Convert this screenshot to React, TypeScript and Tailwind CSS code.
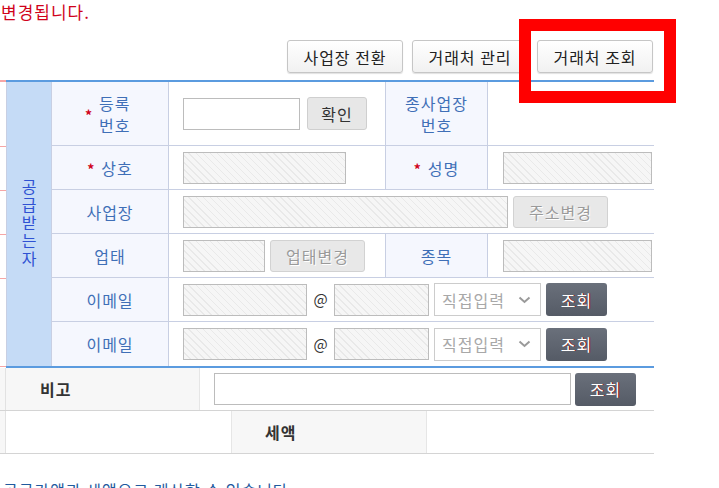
import React from 'react';

const font = "font-['Noto_Sans_CJK_KR',sans-serif] tracking-[1px]";

const hatched =
  'border border-[#bcbcbc] bg-[repeating-linear-gradient(45deg,#f6f6f6_0px,#f6f6f6_4px,#e9e9e9_4px,#e9e9e9_5px)]';

const Star = () => (
  <span className="mr-[6px] translate-y-[1px] text-[14px] font-bold leading-none text-[#d0021b]">*</span>
);

const Label: React.FC<{ children: React.ReactNode; className?: string }> = ({ children, className = '' }) => (
  <div
    className={`flex items-center justify-center border-b border-r border-[#c8cfe3] bg-[#f5f7fe] text-center text-[16px] leading-[22px] text-[#3f6fb7] ${className}`}
  >
    {children}
  </div>
);

const Cell: React.FC<{ children?: React.ReactNode; className?: string }> = ({ children, className = '' }) => (
  <div className={`flex items-center border-b border-r border-[#c8cfe3] bg-white ${className}`}>{children}</div>
);

const GrayButton: React.FC<{ label: string; w: string }> = ({ label, w }) => (
  <button
    className={`${w} h-[32px] rounded-[3px] border border-[#d2d2d2] bg-[#e8e8e8] text-[16px] text-[#9a9a9a] [text-shadow:1px_1px_0_#fff]`}
  >
    {label}
  </button>
);

const DarkButton: React.FC<{ w?: string }> = ({ w = 'w-[61px]' }) => (
  <button
    className={`${w} h-[33px] rounded-[3px] bg-gradient-to-b from-[#6a707b] to-[#555b66] text-[16px] font-normal text-white [text-shadow:1px_0_0_#7a1010]`}
  >
    조회
  </button>
);

const Select = () => (
  <div className="flex h-[33px] w-[107px] items-center justify-between border border-[#cccccc] bg-white pl-[7px] pr-[9px] text-[16px] text-[#a8a8a8]">
    <span>직접입력</span>
    <svg width="13" height="8" viewBox="0 0 13 8" fill="none">
      <path d="M1.5 1.5 L6.5 6 L11.5 1.5" stroke="#9a9a9a" strokeWidth="2" />
    </svg>
  </div>
);

const EmailRow: React.FC<{ last?: boolean }> = ({ last }) => (
  <>
    <Label className={last ? 'border-b-0' : ''}>이메일</Label>
    <Cell className={`col-span-3 border-r-0 pl-[14px] ${last ? 'border-b-0' : ''}`}>
      <div className={`${hatched} h-[32px] w-[124px]`} />
      <span className="w-[27px] text-center text-[15px] tracking-normal text-[#333]">@</span>
      <div className={`${hatched} h-[32px] w-[95px]`} />
      <div className="ml-[5px]">
        <Select />
      </div>
      <div className="ml-[5px]">
        <DarkButton />
      </div>
    </Cell>
  </>
);

export default function App() {
  return (
    <div className={`relative h-[488px] w-[719px] overflow-hidden bg-white ${font}`}>
      <p className="pl-[1px] pt-[1px] text-[17px] leading-[22px] text-[#d0021b]">변경됩니다.</p>

      {/* action buttons */}
      <div className="mt-[17px] flex w-[653px] justify-end gap-[9px]">
        {['사업장 전환', '거래처 관리', '거래처 조회'].map((t) => (
          <button
            key={t}
            className="h-[33px] w-[116px] rounded-[3px] border border-[#c6c6c6] bg-gradient-to-b from-white to-[#f1f1f1] text-[16px] text-[#222] shadow-[0_1px_1px_rgba(0,0,0,0.12)]"
          >
            {t}
          </button>
        ))}
      </div>

      {/* 공급받는자 table */}
      <div className="mt-[7px] flex">
        <div className="flex w-[6px] flex-col">
          <div className="h-[66px] border-t-2 border-[#f6a6a6]" />
          <div className="h-[44px] border-t border-[#f6a6a6]" />
          <div className="h-[44px] border-t border-[#f6a6a6]" />
          <div className="h-[44px] border-t border-[#f6a6a6]" />
          <div className="h-[89px] border-y border-[#f6a6a6]" />
        </div>
        <div className="grid w-[648px] grid-cols-[46px_117px_217px_102px_166px] grid-rows-[64px_44px_44px_44px_44px_44px] border-y-2 border-[#5b9bdf]">
          <div className="row-span-6 flex items-center justify-center border-x border-[#c8cfe3] bg-[#c5dbf6]">
            <span className="text-[16px] leading-[16px] tracking-[2px] text-[#2f52d3] [writing-mode:vertical-rl]">
              공급받는자
            </span>
          </div>

          {/* row 1 */}
          <Label>
            <Star />
            <span className="w-[36px] text-left">
              등록
              <br />
              번호
            </span>
          </Label>
          <Cell className="pl-[14px]">
            <div className="h-[32px] w-[117px] border border-[#bcbcbc] bg-white" />
            <button className="ml-[7px] h-[33px] w-[60px] rounded-[3px] border border-[#cfcfcf] bg-[#e7e7e7] text-[16px] text-[#333]">
              확인
            </button>
          </Cell>
          <Label>
            종사업장
            <br />
            번호
          </Label>
          <Cell className="border-r-0" />

          {/* row 2 */}
          <Label>
            <Star />
            상호
          </Label>
          <Cell className="pl-[14px]">
            <div className={`${hatched} h-[32px] w-[163px]`} />
          </Cell>
          <Label>
            <Star />
            성명
          </Label>
          <Cell className="border-r-0 pl-[15px]">
            <div className={`${hatched} h-[32px] w-[149px]`} />
          </Cell>

          {/* row 3 */}
          <Label>사업장</Label>
          <Cell className="col-span-3 border-r-0 pl-[14px]">
            <div className={`${hatched} h-[32px] w-[325px]`} />
            <div className="ml-[5px]">
              <GrayButton label="주소변경" w="w-[95px]" />
            </div>
          </Cell>

          {/* row 4 */}
          <Label>업태</Label>
          <Cell className="pl-[14px]">
            <div className={`${hatched} h-[32px] w-[82px]`} />
            <div className="ml-[5px]">
              <GrayButton label="업태변경" w="w-[95px]" />
            </div>
          </Cell>
          <Label>종목</Label>
          <Cell className="border-r-0 pl-[15px]">
            <div className={`${hatched} h-[32px] w-[149px]`} />
          </Cell>

          <EmailRow />
          <EmailRow last />
        </div>
      </div>

      {/* 비고 / 세액 */}
      <div className="w-[654px] text-[16px] font-bold text-[#333]">
        <div className="flex h-[43px] border-b border-[#d4d4d4]">
          <div className="w-[6px] border-r border-[#e2e2e2] bg-[#f7f7f7]" />
          <div className="flex w-[194px] items-center border-r border-[#e6e6e6] bg-[#f7f7f7] pl-[34px]">비고</div>
          <div className="flex flex-1 items-center gap-[4px] pl-[14px]">
            <div className="h-[32px] w-[357px] border border-[#bcbcbc] bg-white" />
            <DarkButton />
          </div>
        </div>
        <div className="flex h-[43px] border-b border-[#d4d4d4]">
          <div className="w-[6px] border-r border-[#e2e2e2] bg-[#f7f7f7]" />
          <div className="w-[226px] border-r border-[#e6e6e6]" />
          <div className="flex w-[195px] items-center border-r border-[#e6e6e6] bg-[#f7f7f7] pl-[33px]">세액</div>
          <div className="flex-1" />
        </div>
      </div>

      <p className="mt-[25px] pl-[3px] text-[16px] leading-[22px] text-[#1f5a9e]">
        공급가액과 세액으로 계산할 수 있습니다.
      </p>

      {/* highlight box */}
      <div className="absolute left-[519px] top-[19px] h-[84px] w-[157px] border-[12px] border-[#ff0000]" />
    </div>
  );
}
